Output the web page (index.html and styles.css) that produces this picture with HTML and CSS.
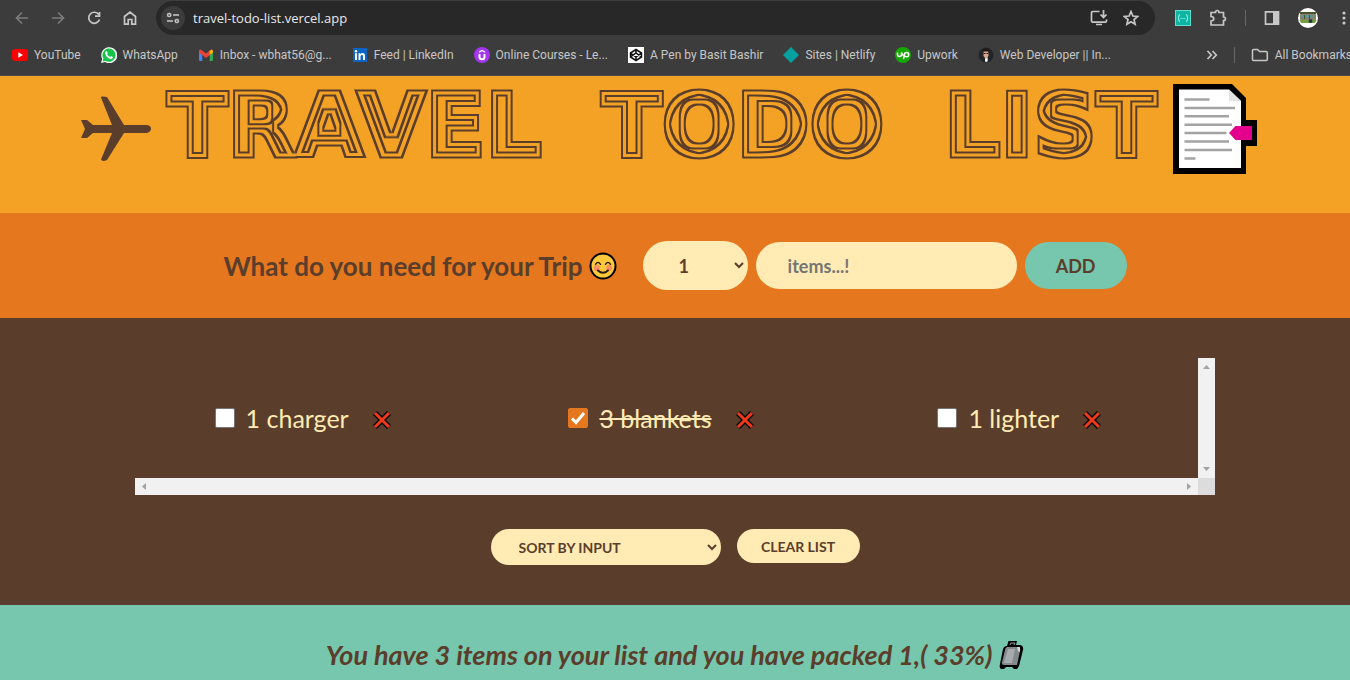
FILE: index.html
```html
<!DOCTYPE html>
<html lang="en">
<head>
<meta charset="utf-8">
<title>Travel Todo List</title>
<link rel="stylesheet" href="styles.css">
</head>
<body>
<svg class="defs" width="0" height="0" aria-hidden="true">
  <filter id="inline-stripes" x="-5%" y="-10%" width="110%" height="120%" color-interpolation-filters="sRGB">
    <feMorphology in="SourceGraphic" operator="erode" radius="2" result="e1"/>
    <feMorphology in="SourceGraphic" operator="erode" radius="5" result="e2"/>
    <feMorphology in="SourceGraphic" operator="erode" radius="7" result="e3"/>
    <feComposite in="SourceGraphic" in2="e1" operator="out" result="outer"/>
    <feComposite in="e2" in2="e3" operator="out" result="inner"/>
    <feMerge><feMergeNode in="outer"/><feMergeNode in="inner"/></feMerge>
  </filter>
</svg>

<div class="browser">
  <div class="toolbar">
    <button class="tool dim" aria-label="Back"><svg width="16" height="16" viewBox="0 0 16 16"><path d="M14 8H3M8 2.500L2.500 8L8 13.500"/></svg></button>
    <button class="tool dim" aria-label="Forward"><svg width="16" height="16" viewBox="0 0 16 16"><path d="M2 8H13M8 2.500L13.500 8L8 13.500"/></svg></button>
    <button class="tool" aria-label="Reload"><svg width="16" height="16" viewBox="0 0 16 16"><path d="M12.800 4.600A5.500 5.500 0 1 0 13.500 9.500M13.500 2V6.200H9"/></svg></button>
    <button class="tool" aria-label="Home"><svg width="16" height="16" viewBox="0 0 16 16"><path d="M2.500 6.500L8 2L13.500 6.500V14.200H9.800V9.500H6.200V14.200H2.500Z"/></svg></button>
    <div class="address">
      <button class="site-info" aria-label="Site information"><svg width="14" height="14" viewBox="0 0 14 14"><circle cx="3.200" cy="4" r="1.600"/><path d="M7 4H13M1 10H7"/><circle cx="10.800" cy="10" r="1.600"/></svg></button>
      <input class="url" type="text" aria-label="Address" value="travel-todo-list.vercel.app">
      <button class="tool" aria-label="Install"><svg width="18" height="18" viewBox="0 0 18 18"><path d="M9.500 2.500H2.800Q1.500 2.500 1.500 4V12Q1.500 13.200 2.800 13.200H15.200Q16.500 13.200 16.500 12V10.500M13.500 1V8M10.500 5.500L13.500 8.500L16.500 5.500M6 15.500H12"/></svg></button>
      <button class="tool" aria-label="Bookmark"><svg width="16" height="16" viewBox="0 0 16 16"><path d="M8 1.500L9.900 6L14.700 6.400L11 9.500L12.100 14.200L8 11.700L3.900 14.200L5 9.500L1.300 6.400L6.100 6Z"/></svg></button>
    </div>
    <div class="extensions">
      <button class="tool" aria-label="JSON viewer"><svg width="16" height="16" viewBox="0 0 16 16" stroke="none"><path class="nostroke" fill="#5de0cf" d="M0 0H16V16H0Z"/><path class="nostroke" fill="#0eb5a3" d="M1 1H15V15H1Z"/><path stroke="#a6fff2" stroke-width="1" d="M5 4.500Q3.800 4.500 3.800 6T3 8Q3.800 8.500 3.800 10T5 11.500M11 4.500Q12.200 4.500 12.200 6T13 8Q12.200 8.500 12.200 10T11 11.500M5.500 8.500H6.500M7.500 8.500H8.500M9.500 8.500H10.500"/></svg></button>
      <button class="tool" aria-label="Extensions"><svg width="18" height="18" viewBox="0 0 18 18"><path d="M2 3.500H6.500Q6.500 1.500 8.200 1.500T10 3.500H14.500V8Q16.500 8 16.500 9.700T14.500 11.500V16H2V12Q4.800 12 4.800 9.800T2 7.500Z"/></svg></button>
      <span class="divider"></span>
      <button class="tool" aria-label="Side panel"><svg width="16" height="16" viewBox="0 0 16 16"><path d="M1.500 1.800H14.500V14.200H1.500Z"/><path class="nostroke" fill="#c7c7c7" d="M9 1H15V15H9Z"/></svg></button>
      <button class="tool" aria-label="Profile"><svg width="20" height="20" viewBox="0 0 20 20"><circle class="nostroke" fill="#fff" cx="10" cy="10" r="10"/><path class="nostroke" fill="#8c8266" d="M2 5H18V12H2Z"/><path class="nostroke" fill="#5b96a0" d="M3 7H16V9.500H3Z"/><path class="nostroke" fill="#48532f" d="M2 4H18V6H2ZM6 7H7V11H6ZM11 7H12V11H11Z"/><path class="nostroke" fill="#70a43e" d="M1.500 12H18.500L17 15H3Z"/><circle class="nostroke" fill="#263746" cx="12.500" cy="13" r="2"/></svg></button>
      <button class="tool" aria-label="Menu"><svg width="14" height="16" viewBox="0 0 14 16"><g fill="#c7c7c7" class="nostroke"><circle cx="8" cy="3" r="1.600"/><circle cx="8" cy="8" r="1.600"/><circle cx="8" cy="13" r="1.600"/></g></svg></button>
    </div>
  </div>
  <nav class="bookmarks" aria-label="Bookmarks">
    <a href="#"><svg width="16" height="16" viewBox="0 0 16 16"><rect y="2" width="16" height="12" rx="3" fill="#f00"/><path fill="#fff" d="M6.300 5.300L11 8L6.300 10.700Z"/></svg>YouTube</a>
    <a href="#"><svg width="16" height="16" viewBox="0 0 16 16"><path fill="#fff" d="M0 16L1.200 12A8 8 0 1 1 4 15Z"/><path fill="#16c44b" d="M1.500 14.500L2.400 11.600A6.600 6.600 0 1 1 4.500 13.700Z"/><path fill="#fff" d="M5.500 4L6.800 6L6.100 7Q7 9.200 9.200 9.900L10.200 9L12.200 10.200Q11.600 12.200 9.600 11.900Q5 10.800 4.100 6.200Q4.200 4.300 5.500 4Z"/></svg>WhatsApp</a>
    <a href="#"><svg width="16" height="16" viewBox="0 0 16 16"><path fill="#4285f4" d="M1 4L4.300 6.500V14H2Q1 14 1 13Z"/><path fill="#34a853" d="M11.700 6.500L15 4V13Q15 14 14 14H11.700Z"/><path fill="#ea4335" d="M1 3.500Q2 2 3.500 3L8 6.500L12.500 3Q14 2 15 3.500V5.500L8 11L1 5.500Z"/><path fill="#fbbc04" d="M11.700 4L13.300 2.700Q15 2.500 15 4.500V5.500L11.700 8Z"/></svg>Inbox - wbhat56@g...</a>
    <a href="#"><svg width="16" height="16" viewBox="0 0 16 16"><path fill="#0a66c2" d="M1 1H15V15H1Z"/><g fill="#fff"><circle cx="4" cy="4.200" r="1.200"/><path d="M3 6.300H5V13H3ZM6.500 6.300H8.400V7.200Q9.200 6.100 10.600 6.100Q13 6.200 13 9.200V13H11V9.500Q11 7.800 9.900 7.800T8.500 9.500V13H6.500Z"/></g></svg>Feed | LinkedIn</a>
    <a href="#"><svg width="16" height="16" viewBox="0 0 16 16"><circle cx="8" cy="8" r="8" fill="#a435f0"/><path fill="none" stroke="#fff" stroke-width="2" d="M5.500 7V10Q5.500 12.300 8 12.300T10.500 10V7"/><path fill="none" stroke="#fff" stroke-width="1.300" d="M5 5.200L8 3.400L11 5.200"/></svg>Online Courses - Le...</a>
    <a href="#"><svg width="16" height="16" viewBox="0 0 16 16"><rect width="16" height="16" fill="#fff"/><path fill="none" stroke="#111" stroke-width="1.500" d="M8 2.500L13.500 6V10L8 13.500L2.500 10V6ZM2.500 6L8 10L13.500 6M2.500 10L8 6L13.500 10M8 2.500V6M8 10V13.500"/></svg>A Pen by Basit Bashir</a>
    <a href="#"><svg width="16" height="16" viewBox="0 0 16 16"><path fill="#05a09f" d="M8 0L16 8L8 16L0 8Z"/></svg>Sites | Netlify</a>
    <a href="#"><svg width="16" height="16" viewBox="0 0 16 16"><circle cx="8" cy="8" r="8" fill="#14a800"/><path fill="none" stroke="#fff" stroke-width="1.500" d="M2.500 5.500V7.500A2 2 0 0 0 6.500 7.500V5.500Q7.500 8 9 9.300M8.500 12L9.500 7.500A2.100 2.100 0 1 1 11.500 9.700Q10 9.700 9 8.500"/></svg>Upwork</a>
    <a href="#"><svg width="16" height="16" viewBox="0 0 16 16"><circle cx="8" cy="8" r="7.500" fill="#20242b"/><path fill="#d8a58b" d="M5.500 4Q8 2 10.500 4.500V8.500L9.500 11V14Q8 15 7 13.500V11L5.500 9Z"/><path fill="#211914" d="M5 5Q4.500 1.500 8 1.500Q11.500 1.500 11 6L10 4.500H6ZM5.500 6H7.500V7H5.500ZM8.500 6H10.500V7H8.500Z"/><path fill="#fff" d="M7 12L9.500 11V14.500L7.500 15Z"/></svg>Web Developer || In...</a>
    <div class="bookmarks-end">
      <button class="tool" aria-label="More bookmarks"><svg width="12" height="12" viewBox="0 0 12 12"><path d="M1.500 2L5.300 6L1.500 10M6.500 2L10.300 6L6.500 10"/></svg></button>
      <span class="divider"></span>
      <a href="#"><svg width="18" height="16" viewBox="0 0 18 16"><path fill="none" stroke="#c7c7c7" stroke-width="1.500" d="M1.500 3.500Q1.500 2.500 2.500 2.500H6.500L8.500 4.500H15Q16.300 4.500 16.300 5.800V12.500Q16.300 13.500 15.300 13.500H2.500Q1.500 13.500 1.500 12.500Z"/></svg>All Bookmarks</a>
    </div>
  </nav>
</div>

<header class="title-band">
  <svg class="plane" width="70" height="66" viewBox="0 0 70 66"><path fill="#5a3e2b" d="M0 24H6L12 29H31L20 1.500Q20 0 22 0.500L26 1L43 29H66Q70 29.500 70 32.500T66 37H43L26 64Q21 66 20 63.500L31 37H12L6 42H0L4 33Z"/></svg>
  <h1 class="title"><span>TRAVEL</span> <span>TODO</span> <span>LIST</span></h1>
  <svg class="document" width="84" height="90" viewBox="0 0 84 90"><path d="M0 0H59L73 14V36H84V62H73V90H0Z"/><path fill="#fff" d="M6 5.500H56L68 17V84H6Z"/><path fill="#e3e3e3" d="M56 5.500L68 17H56Z"/><path stroke="#a3a3a3" stroke-width="2.600" d="M11.500 15.500H36.500M11.500 24H62M11.500 32.300H56M11.500 40.700H59M11.500 49H53.500M11.500 57.500H56M11.500 66H59M11.500 74.500H22.500"/><path fill="#e3008c" d="M56 49L62.500 42H79V56H62.500Z"/></svg>
</header>

<form class="add-form">
  <h3 class="question">What do you need for your Trip<svg width="28" height="28" viewBox="0 0 28 28"><circle cx="14" cy="14" r="12.500" fill="#fcc93c" stroke="#000" stroke-width="2"/><circle cx="7.800" cy="16" r="3" fill="#f78e5f"/><circle cx="20.200" cy="16" r="3" fill="#f78e5f"/><g fill="none" stroke="#2c1b09" stroke-linecap="round" stroke-width="1.400"><path d="M6.500 12.300Q9 8.500 11.500 12.300M16.500 12.300Q19 8.500 21.500 12.300"/><path stroke-width="2" d="M9 18.500Q14 23 19 18.500"/></g></svg></h3>
  <select class="field quantity" aria-label="Quantity"><option>1</option><option>2</option><option>3</option></select>
  <input class="field item-name" type="text" aria-label="Item" placeholder="items...!">
  <button class="add" type="button">ADD</button>
</form>

<main class="list">
  <div class="scroll-box">
    <ul class="items">
      <li><input type="checkbox" id="charger"><label for="charger">1 charger</label><button class="remove" aria-label="Remove charger"><svg width="20" height="20" viewBox="0 0 20 20"><path stroke="#000" stroke-width="5.500" d="M3 3L17 17M17 3L3 17"/><path stroke="#f03a17" stroke-width="3" d="M3 3L17 17M17 3L3 17"/></svg></button></li>
      <li><input type="checkbox" id="blankets" checked><label for="blankets">3 blankets</label><button class="remove" aria-label="Remove blankets"><svg width="20" height="20" viewBox="0 0 20 20"><path stroke="#000" stroke-width="5.500" d="M3 3L17 17M17 3L3 17"/><path stroke="#f03a17" stroke-width="3" d="M3 3L17 17M17 3L3 17"/></svg></button></li>
      <li><input type="checkbox" id="lighter"><label for="lighter">1 lighter</label><button class="remove" aria-label="Remove lighter"><svg width="20" height="20" viewBox="0 0 20 20"><path stroke="#000" stroke-width="5.500" d="M3 3L17 17M17 3L3 17"/><path stroke="#f03a17" stroke-width="3" d="M3 3L17 17M17 3L3 17"/></svg></button></li>
    </ul>
    <div class="bar vertical"><svg width="7" height="4" viewBox="0 0 7 4"><path d="M0 4L3.500 0L7 4Z"/></svg><svg width="7" height="4" viewBox="0 0 7 4"><path d="M0 0L3.500 4L7 0Z"/></svg></div>
    <div class="bar horizontal"><svg width="4" height="7" viewBox="0 0 4 7"><path d="M4 0L0 3.500L4 7Z"/></svg><svg width="4" height="7" viewBox="0 0 4 7"><path d="M0 0L4 3.500L0 7Z"/></svg></div>
    <div class="corner"></div>
  </div>
  <div class="actions">
    <select class="sort" aria-label="Sort"><option>SORT BY INPUT</option><option>SORT BY DESCRIPTION</option><option>SORT BY PACKED STATUS</option></select>
    <button class="clear">CLEAR LIST</button>
  </div>
</main>

<footer class="stats">
  <em>You have 3 items on your list and you have packed 1,( 33%)</em>
  <svg width="25" height="28" viewBox="0 0 25 28"><path d="M8 5L9.500 0H18L17 4H21Q25 5 24 9L20 25L18 28H15L13 26H7L5 28H2Q0 27 1 23L4 8Q5 5 8 5Z"/><path fill="#84898d" d="M8 6H19Q22 7 21 10L18 24H5Q2 24 3 21L6 9Q6 7 8 6Z"/><path fill="#a5abaf" d="M9 8H16L13 22H5Z"/><path fill="#d4d7d9" d="M18 6H21V11L19 10Z"/><path stroke="#989da0" stroke-width="1" d="M11 4L12 2H16L15 4" fill="none"/></svg>
</footer>
</body>
</html>
```
FILE: styles.css
```css
* { box-sizing: border-box; }

body {
  margin: 0;
  min-height: 100vh;
  display: flex;
  flex-direction: column;
  overflow: hidden;
  color: #5a3e2b;
  font-family: Lato, "Liberation Sans", sans-serif;
}

button, input, select { font: inherit; color: inherit; border: 0; }
button { padding: 0; background: none; cursor: pointer; }
svg { display: block; flex: none; }
.defs { position: absolute; }

/* browser chrome */
.browser {
  background: #3c3c3c;
  border-bottom: 1px solid #4c4c4c;
  color: #c7c7c7;
  font: 12px/16px Roboto, sans-serif;
  overflow: hidden;
}
.toolbar { display: flex; align-items: center; gap: 20px; padding: 1px 0 0 14px; }
.tool svg { fill: none; stroke: #c7c7c7; stroke-width: 1.7; }
.tool .nostroke { stroke: none; }
.dim svg { stroke: #7b7b7b; }
.address {
  flex: 1;
  display: flex;
  align-items: center;
  gap: 15px;
  height: 34px;
  margin-left: -2px;
  padding: 0 16px 0 5px;
  border-radius: 17px;
  background: #282828;
}
.site-info {
  display: grid;
  place-items: center;
  width: 24px;
  height: 24px;
  border-radius: 50%;
  background: #3c3c3c;
}
.site-info svg { fill: none; stroke: #c7c7c7; stroke-width: 1.5; }
.url { flex: 1; min-width: 0; margin-left: -7px; padding: 0; background: none; color: #e8e8e8; font: 13px "Open Sans", sans-serif; }
.extensions { display: flex; align-items: center; gap: 18px; }
.divider { width: 1px; height: 16px; background: #666; }

.bookmarks { display: flex; align-items: center; gap: 20px; padding: 12px 0 12px 12px; white-space: nowrap; }
.bookmarks a { display: flex; align-items: center; gap: 6px; color: inherit; text-decoration: none; }
.bookmarks-end { display: flex; align-items: center; gap: 16px; margin: 0 -2px 0 auto; }

/* title */
.title-band {
  display: flex;
  justify-content: center;
  gap: 16px;
  padding: 8px 12px 39px 0;
  background: #f4a226;
}
.plane { margin-top: 12px; }
.title {
  display: flex;
  gap: 60px;
  margin: 0;
  font: 700 88px/84px "DejaVu Sans", sans-serif;
  -webkit-text-stroke: 5px #5a3e2b;
  filter: url(#inline-stripes);
}

/* add form */
.add-form {
  display: flex;
  align-items: center;
  justify-content: center;
  gap: 8px;
  padding: 28px 0;
  background: #e5771f;
  font-size: 18px;
  font-weight: 700;
}
.question { display: flex; align-items: center; gap: 6px; margin: 0 18px 0 0; font-size: 26px; }
.field { background: #ffebb3; border-radius: 25px; padding: 12px 32px; }
.quantity { width: 105px; height: 49px; }
.quantity, .sort {
  appearance: none;
  background: #ffebb3 url("data:image/svg+xml,%3Csvg xmlns='http://www.w3.org/2000/svg' width='10' height='7'%3E%3Cpath d='M1 1L5 5L9 1' fill='none' stroke='%235a3e2b' stroke-width='2'/%3E%3C/svg%3E") no-repeat right 4px center;
}
.quantity { padding-left: 36px; }
.item-name { width: 261px; height: 47px; }
.item-name::placeholder { color: #757575; }
.add { width: 102px; height: 47px; border-radius: 24px; background: #76c7ad; }

/* packing list */
.list { background: #5a3e2b; padding: 40px 0; }
.scroll-box {
  display: grid;
  grid-template-columns: 1fr 17px;
  grid-template-rows: 120px 17px;
  width: 80%;
  margin: 0 auto 34px;
}
.items {
  display: grid;
  grid-template-columns: repeat(3, 1fr);
  gap: 12px;
  align-items: center;
  margin: 0;
  padding: 0;
  list-style: none;
  color: #ffebb3;
  font-size: 25px;
}
.items li { display: flex; align-items: center; justify-content: center; gap: 11px; }
.items input {
  appearance: none;
  width: 20px;
  height: 20px;
  margin: 0;
  border: 1px solid #767676;
  border-radius: 2px;
  background: #fff;
}
.items input:checked {
  border-color: #e5771f;
  background: #e5771f url("data:image/svg+xml,%3Csvg xmlns='http://www.w3.org/2000/svg' width='18' height='18'%3E%3Cpath d='M3 9.500L7 13.500L15 4' fill='none' stroke='white' stroke-width='3'/%3E%3C/svg%3E") center;
}
.items input:checked + label { text-decoration: line-through; }
.remove { padding: 4px 10px 0 12px; }
.bar { display: flex; align-items: center; justify-content: space-between; background: #f1f1f1; }
.bar svg { fill: #a3a3a3; }
.vertical { flex-direction: column; padding: 7px 0; }
.horizontal { padding: 0 7px; }
.corner { background: #dcdcdc; }

.actions { display: flex; justify-content: center; gap: 16px; font-size: 14px; font-weight: 700; }
.sort { width: 230px; height: 36px; padding: 0 28px; border-radius: 18px; }
.clear { width: 123px; height: 34px; border-radius: 17px; background: #ffebb3; }

/* stats */
.stats {
  flex: 1;
  display: flex;
  align-items: flex-start;
  justify-content: center;
  gap: 7px;
  padding-top: 36px;
  background: #76c7ad;
  font-size: 27px;
  line-height: 28px;
  font-weight: 700;
}
```
